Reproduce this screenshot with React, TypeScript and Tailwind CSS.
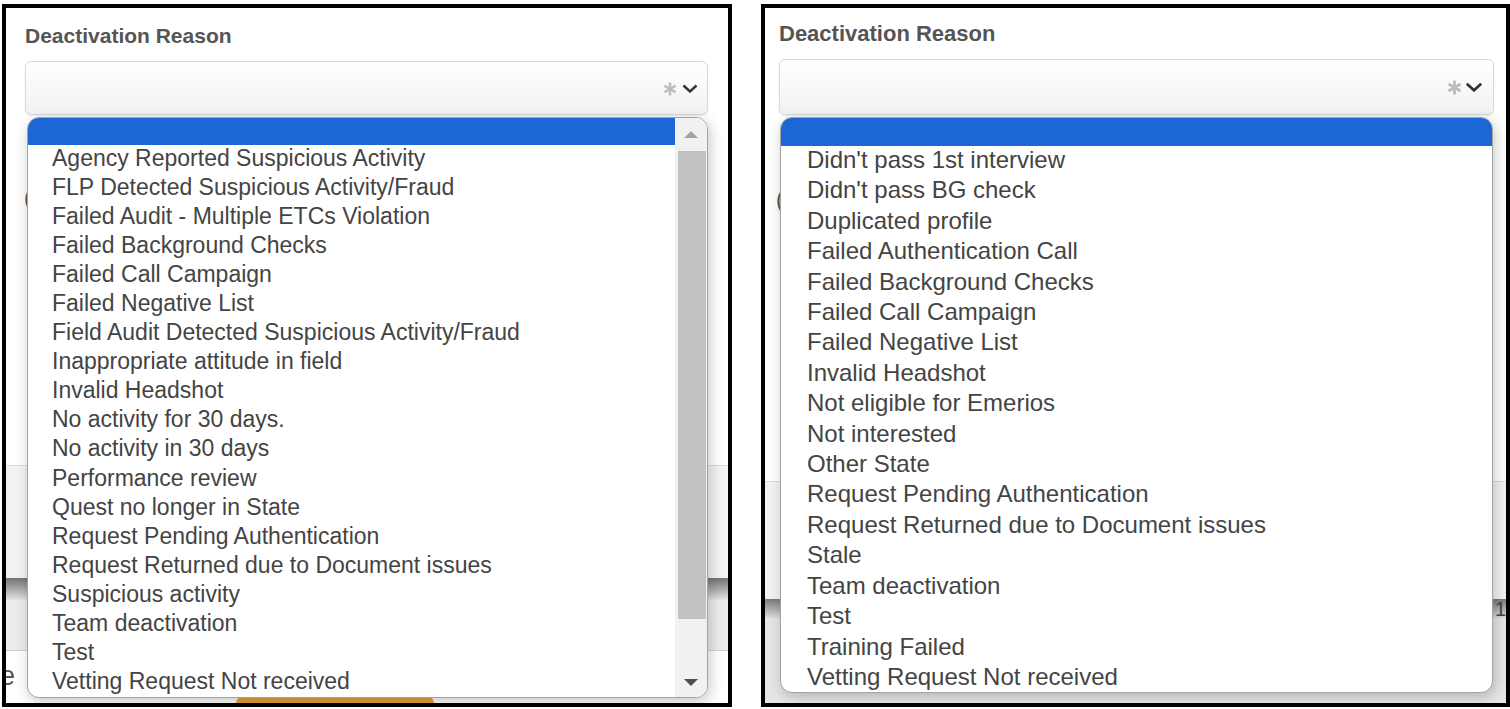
import React from 'react';

const leftReasons = [
  "Agency Reported Suspicious Activity",
  "FLP Detected Suspicious Activity/Fraud",
  "Failed Audit - Multiple ETCs Violation",
  "Failed Background Checks",
  "Failed Call Campaign",
  "Failed Negative List",
  "Field Audit Detected Suspicious Activity/Fraud",
  "Inappropriate attitude in field",
  "Invalid Headshot",
  "No activity for 30 days.",
  "No activity in 30 days",
  "Performance review",
  "Quest no longer in State",
  "Request Pending Authentication",
  "Request Returned due to Document issues",
  "Suspicious activity",
  "Team deactivation",
  "Test",
  "Vetting Request Not received",
];

const rightReasons = [
  "Didn't pass 1st interview",
  "Didn't pass BG check",
  "Duplicated profile",
  "Failed Authentication Call",
  "Failed Background Checks",
  "Failed Call Campaign",
  "Failed Negative List",
  "Invalid Headshot",
  "Not eligible for Emerios",
  "Not interested",
  "Other State",
  "Request Pending Authentication",
  "Request Returned due to Document issues",
  "Stale",
  "Team deactivation",
  "Test",
  "Training Failed",
  "Vetting Request Not received",
];

const Asterisk = ({ className }: { className: string }) => (
  <svg viewBox="0 0 14 14" className={className}>
    <g stroke="#bcbcbc" strokeWidth="2.6">
      <line x1="7" y1="0.5" x2="7" y2="13.5" />
      <line x1="1.4" y1="3.75" x2="12.6" y2="10.25" />
      <line x1="1.4" y1="10.25" x2="12.6" y2="3.75" />
    </g>
  </svg>
);

const Chevron = ({ className }: { className: string }) => (
  <svg viewBox="0 0 16 9" className={className}>
    <polyline points="1.5,1.5 8,7.5 14.5,1.5" fill="none" stroke="#333" strokeWidth="2.4" />
  </svg>
);

const App = () => {
  return (
    <div className="flex h-[709px] w-[1510px] overflow-hidden bg-white font-['Liberation_Sans',Arial,sans-serif]">
      {/* left capture */}
      <div className="relative ml-[2px] mt-[4px] flex h-[703px] w-[730px] shrink-0 flex-col overflow-hidden border-4 border-black bg-white">
        <div className="shrink-0 px-[19px] pt-[17px]">
          <div className="text-[21px] font-bold leading-[21px] text-[#555]">Deactivation Reason</div>
          <div className="mt-[15px] flex h-[54px] w-[683px] items-center justify-end gap-[5px] rounded-[6px] border border-[#d9d9d9] bg-linear-to-b from-white to-[#f2f2f2] pr-[9px] shadow-[0_1px_2px_rgba(0,0,0,0.08)]">
            <Asterisk className="mt-[1px] h-[14px] w-[14px]" />
            <Chevron className="h-[9px] w-[16px]" />
          </div>
        </div>

        {/* page content hidden under the open list */}
        <div className="h-[351px] shrink-0 border-b border-[#dcdcdc] pl-[18px] pt-[72px] text-[22px] leading-[22px] text-[#555]">(</div>
        <div className="h-[112px] shrink-0 bg-[#f3f3f3]" />
        <div className="h-[22px] shrink-0 bg-linear-to-b from-[#747474] to-[#e4e4e4]" />
        <div className="h-[51px] shrink-0 border-b border-[#cfcfcf] bg-[#ececec]" />
        <div className="flex min-h-0 flex-1 items-start">
          <span className="-ml-[6px] mt-[12px] text-[27px] leading-[27px] text-[#555]">e</span>
          <div className="ml-[221px] mt-[46px] h-[30px] w-[198px] shrink-0 rounded-[6px] bg-[#e8a23c]" />
        </div>

        <div className="absolute left-[21px] top-[109px] flex h-[581px] w-[681px] overflow-hidden rounded-[12px] border border-[#a3a3a3] bg-white shadow-[2px_4px_14px_rgba(0,0,0,0.22)]">
          <div className="flex-1">
            <div className="h-[27px] bg-[#1b67d3]" />
            {leftReasons.map((r) => (
              <div key={r} className="h-[29.06px] whitespace-nowrap pl-[24px] text-[23px] leading-[26px] text-[#444]">
                {r}
              </div>
            ))}
          </div>
          <div className="flex w-[32px] flex-col bg-[#f1f1f1]">
            <div className="flex h-[33px] items-center justify-center">
              <svg viewBox="0 0 14 7" className="h-[7px] w-[14px]">
                <polygon points="0,7 7,0 14,7" fill="#a3a3a3" />
              </svg>
            </div>
            <div className="ml-[3px] h-[468px] w-[28px] bg-[#c1c1c1]" />
            <div className="flex-1" />
            <div className="flex h-[30px] items-center justify-center">
              <svg viewBox="0 0 14 7" className="h-[7px] w-[14px]">
                <polygon points="0,0 14,0 7,7" fill="#505050" />
              </svg>
            </div>
          </div>
        </div>
      </div>

      {/* right capture */}
      <div className="relative ml-[29px] mt-[4px] flex h-[703px] w-[749px] shrink-0 flex-col overflow-hidden border-4 border-black bg-white">
        <div className="shrink-0 pl-[14px] pt-[15px]">
          <div className="text-[22px] font-bold leading-[22px] text-[#555]">Deactivation Reason</div>
          <div className="mt-[14px] flex h-[56px] w-[715px] items-center justify-end gap-[3px] rounded-[6px] border border-[#d9d9d9] bg-linear-to-b from-white to-[#f2f2f2] pr-[10px] shadow-[0_1px_2px_rgba(0,0,0,0.08)]">
            <Asterisk className="mt-[1px] h-[15px] w-[15px]" />
            <Chevron className="h-[10px] w-[18px]" />
          </div>
        </div>

        <div className="h-[367px] shrink-0 border-b border-[#dcdcdc] pl-[11px] pt-[74px] text-[23px] leading-[23px] text-[#555]">(</div>
        <div className="h-[117px] shrink-0 bg-[#f3f3f3]" />
        <div className="flex h-[20px] shrink-0 justify-end bg-linear-to-b from-[#7a7a7a] to-[#e4e4e4]">
          <span className="text-[20px] leading-[20px] text-[#444]">1</span>
        </div>
        <div className="min-h-0 flex-1 bg-[#e6e6e6]" />

        <div className="absolute left-[15px] top-[109px] h-[576px] w-[713px] overflow-hidden rounded-[12px] border border-[#a3a3a3] bg-white shadow-[2px_4px_14px_rgba(0,0,0,0.22)]">
          <div className="h-[28px] bg-[#1b67d3]" />
          {rightReasons.map((r) => (
            <div key={r} className="h-[30.41px] whitespace-nowrap pl-[26px] text-[24px] leading-[28px] text-[#444]">
              {r}
            </div>
          ))}
        </div>
      </div>
    </div>
  );
};

export default App;
